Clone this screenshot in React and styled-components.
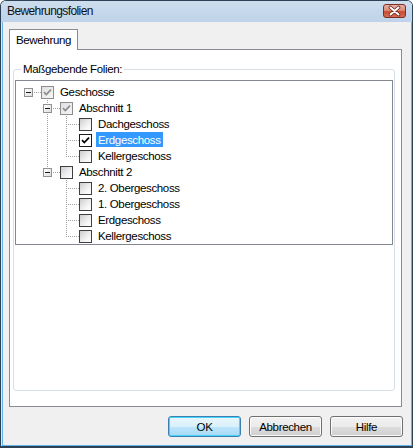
import React from 'react';
import styled, { createGlobalStyle, css } from 'styled-components';

const GlobalStyle = createGlobalStyle`
  html, body {
    margin: 0;
    padding: 0;
    background: #ffffff;
  }
  body {
    font-family: "Liberation Sans", Arial, sans-serif;
  }
  * {
    box-sizing: border-box;
  }
`;

const dotsDown = css`
  background: linear-gradient(to bottom, #a0a0a0 50%, transparent 50%) 0 0 / 1px 2px repeat-y;
`;

const dotsRight = css`
  background: linear-gradient(to right, #a0a0a0 50%, transparent 50%) 0 0 / 2px 1px repeat-x;
`;

const Window = styled.div`
  width: 413px;
  height: 448px;
  display: flex;
  flex-direction: column;
  border: 1px solid #2e4257;
  border-bottom-width: 2px;
  border-radius: 6px 6px 0 0;
  overflow: hidden;
  background: #f0f0f0;
`;

const TitleBar = styled.div`
  height: 21px;
  flex: none;
  display: flex;
  align-items: flex-start;
  justify-content: space-between;
  padding: 0 6px;
  background: linear-gradient(180deg, #cddded 0%, #bed3ea 100%);
`;

const Title = styled.span`
  font-size: 12px;
  letter-spacing: -0.6px;
  line-height: 21px;
  color: #111111;
`;

const CloseButton = styled.div`
  width: 23px;
  height: 14px;
  margin-top: 3px;
  display: flex;
  align-items: center;
  justify-content: center;
  border: 1px solid #7b2f24;
  border-radius: 3px;
  background: linear-gradient(180deg, #eab0a3 0%, #dc8a76 45%, #c64d35 55%, #d56d52 100%);
`;

const Client = styled.div`
  flex: 1;
  display: flex;
  flex-direction: column;
  padding: 7px 10px 0 8px;
  box-shadow: inset 1px 0 0 #dde8f4, inset 2px 0 0 #63b3e6, inset -1px 0 0 #63b3e6, inset 0 -1px 0 #63b3e6;
`;

const TabStrip = styled.div`
  display: flex;
`;

const Tab = styled.div`
  position: relative;
  z-index: 1;
  height: 21px;
  margin-bottom: -1px;
  padding: 0 6px;
  border: 1px solid #898c95;
  border-bottom: 0;
  background: #ffffff;
  font-size: 11.5px;
  letter-spacing: -0.35px;
  line-height: 20px;
  color: #000000;
`;

const Panel = styled.div`
  height: 358px;
  display: flex;
  flex-direction: column;
  padding: 0 6px 15px 3px;
  border: 1px solid #898c95;
  background: #ffffff;
`;

const Group = styled.fieldset`
  flex: 1;
  display: flex;
  flex-direction: column;
  min-width: 0;
  margin: 13px 0 0 0;
  padding: 4px 1px 3px 1px;
  border: 1px solid #d5dfe5;
  border-radius: 3px;
`;

const Legend = styled.legend`
  margin-left: 6px;
  padding: 0 2px;
  font-size: 11.5px;
  letter-spacing: -0.35px;
  line-height: 13px;
  color: #000000;
`;

const Tree = styled.div`
  flex: 1;
  padding: 3px 0 0 3px;
  border: 1px solid #828790;
  background: #ffffff;
`;

const Row = styled.div`
  display: flex;
  align-items: center;
  height: 16px;
`;

const Guide = styled.span`
  position: relative;
  flex: none;
  width: 19px;
  height: 16px;

  &::before {
    content: '';
    display: ${({ $line }) => ($line ? 'block' : 'none')};
    position: absolute;
    left: 9px;
    top: 0;
    width: 1px;
    height: 16px;
    ${dotsDown}
  }
`;

const Branch = styled.span`
  position: relative;
  flex: none;
  width: 22px;
  height: 16px;

  &::before {
    content: '';
    display: ${({ $kind }) => ($kind === 'root' ? 'none' : 'block')};
    position: absolute;
    left: 9px;
    top: 0;
    width: 1px;
    height: ${({ $kind }) => ($kind === 'elbow' ? '8px' : '16px')};
    ${dotsDown}
  }

  &::after {
    content: '';
    position: absolute;
    left: 9px;
    right: 0;
    top: 8px;
    height: 1px;
    ${dotsRight}
  }
`;

const Expander = styled.span`
  position: absolute;
  z-index: 1;
  left: 5px;
  top: 4px;
  width: 9px;
  height: 9px;
  border: 1px solid #919191;
  background: linear-gradient(135deg, #ffffff 0%, #dedede 100%);

  &::after {
    content: '';
    position: absolute;
    left: 1px;
    top: 3px;
    width: 5px;
    height: 1px;
    background: #1a1a1a;
  }
`;

const boxLook = {
  off: css`
    border-color: #3f3f3f;
    background: linear-gradient(135deg, #cdcdcd 0%, #f2f2f2 60%, #ffffff 100%);
  `,
  on: css`
    border-color: #1c1c1c;
    background: #ffffff;
  `,
  grayed: css`
    border-color: #8d8d8d;
    background: linear-gradient(135deg, #e0e0e0 0%, #f6f6f6 100%);
  `,
};

const CheckBox = styled.span`
  flex: none;
  display: flex;
  width: 13px;
  height: 13px;
  border: 1px solid;
  ${({ $state }) => boxLook[$state]}
`;

const Label = styled.span`
  align-self: flex-start;
  margin-left: 4px;
  padding: 0 2px;
  height: 15px;
  font-size: 11.5px;
  letter-spacing: -0.35px;
  line-height: 16px;
  white-space: nowrap;
  overflow: hidden;
  color: ${({ $selected }) => ($selected ? '#ffffff' : '#000000')};
  background: ${({ $selected }) => ($selected ? '#3399ff' : 'transparent')};
`;

const ButtonRow = styled.div`
  display: flex;
  justify-content: flex-end;
  gap: 8px;
  margin: 9px -1px 0 0;
`;

const Button = styled.div`
  width: 73px;
  height: 21px;
  display: flex;
  align-items: center;
  justify-content: center;
  border: 1px solid ${({ $primary }) => ($primary ? '#3c7fb1' : '#707070')};
  border-radius: 3px;
  font-size: 11.5px;
  letter-spacing: -0.35px;
  color: #000000;
  background: ${({ $primary }) =>
    $primary
      ? 'linear-gradient(180deg, #eaf6fd 0%, #d9f0fc 50%, #bee6fd 51%, #a7d9f5 100%)'
      : 'linear-gradient(180deg, #f2f2f2 0%, #ebebeb 50%, #dddddd 51%, #cfcfcf 100%)'};
  box-shadow: inset 0 0 0 1px ${({ $primary }) => ($primary ? '#48d4f8' : '#fbfbfb')};
`;

const CheckMark = ({ color }) => (
  <svg width="11" height="11" viewBox="0 0 11 11">
    <path d="M2 5.2 L4.3 7.6 L9 2.6" fill="none" stroke={color} strokeWidth="1.7" />
  </svg>
);

const CloseGlyph = () => (
  <svg width="21" height="12" viewBox="0 0 21 12">
    <path d="M6.5 2.5 L14.5 9.5 M14.5 2.5 L6.5 9.5" stroke="#6b2418" strokeWidth="3.6" strokeLinecap="round" />
    <path d="M6.5 2.5 L14.5 9.5 M14.5 2.5 L6.5 9.5" stroke="#ffffff" strokeWidth="2" strokeLinecap="round" />
  </svg>
);

const nodes = [
  { label: 'Geschosse', guides: [], branch: 'root', expander: true, check: 'grayed' },
  { label: 'Abschnitt 1', guides: [false], branch: 'tee', expander: true, check: 'grayed' },
  { label: 'Dachgeschoss', guides: [false, true], branch: 'tee', check: 'off' },
  { label: 'Erdgeschoss', guides: [false, true], branch: 'tee', check: 'on', selected: true },
  { label: 'Kellergeschoss', guides: [false, true], branch: 'elbow', check: 'off' },
  { label: 'Abschnitt 2', guides: [false], branch: 'elbow', expander: true, check: 'off' },
  { label: '2. Obergeschoss', guides: [false, false], branch: 'tee', check: 'off' },
  { label: '1. Obergeschoss', guides: [false, false], branch: 'tee', check: 'off' },
  { label: 'Erdgeschoss', guides: [false, false], branch: 'tee', check: 'off' },
  { label: 'Kellergeschoss', guides: [false, false], branch: 'elbow', check: 'off' },
];

const TreeRow = ({ node }) => (
  <Row>
    {node.guides.map((line, i) => (
      <Guide key={i} $line={line} />
    ))}
    <Branch $kind={node.branch}>{node.expander && <Expander />}</Branch>
    <CheckBox $state={node.check}>
      {node.check === 'on' && <CheckMark color="#000000" />}
      {node.check === 'grayed' && <CheckMark color="#8d8d8d" />}
    </CheckBox>
    <Label $selected={node.selected}>{node.label}</Label>
  </Row>
);

const App = () => (
  <>
    <GlobalStyle />
    <Window>
      <TitleBar>
        <Title>Bewehrungsfolien</Title>
        <CloseButton>
          <CloseGlyph />
        </CloseButton>
      </TitleBar>
      <Client>
        <TabStrip>
          <Tab>Bewehrung</Tab>
        </TabStrip>
        <Panel>
          <Group>
            <Legend>Maßgebende Folien:</Legend>
            <Tree>
              {nodes.map((node, i) => (
                <TreeRow key={i} node={node} />
              ))}
            </Tree>
          </Group>
        </Panel>
        <ButtonRow>
          <Button $primary>OK</Button>
          <Button>Abbrechen</Button>
          <Button>Hilfe</Button>
        </ButtonRow>
      </Client>
    </Window>
  </>
);

export default App;
